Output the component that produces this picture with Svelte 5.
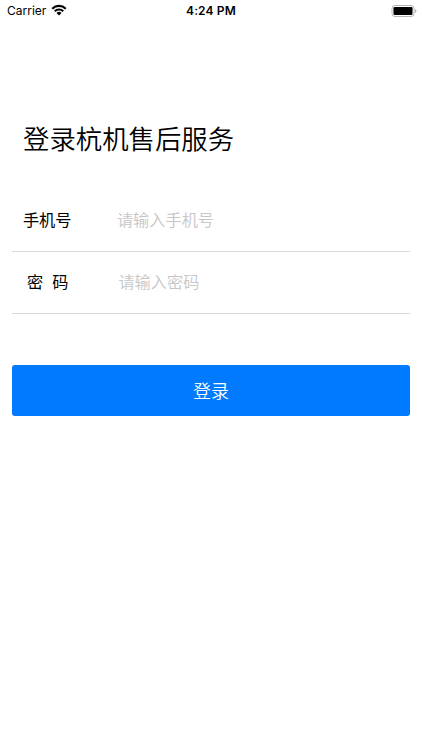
<script>
  let phone = $state('');
  let password = $state('');
</script>

<div class="screen">
  <header class="status">
    <div class="carrier">
      <span>Carrier</span>
      <svg width="16" height="12" viewBox="0 0 16 12">
        <path d="M0.5 3.9 A10.8 10.8 0 0 1 15.5 3.9 L14 5.4 A8.7 8.7 0 0 0 2 5.4 Z" />
        <path d="M3 6.4 A7.2 7.2 0 0 1 13 6.4 L11.5 7.9 A5 5 0 0 0 4.5 7.9 Z" />
        <path d="M5.5 8.9 A3.6 3.6 0 0 1 10.5 8.9 L8 11.4 Z" />
      </svg>
    </div>
    <div class="time">4:24 PM</div>
    <svg class="battery" width="26" height="12" viewBox="0 0 26 12">
      <rect x="1" y="0.5" width="22" height="11" rx="3" fill="none" stroke="#b4b4b4" />
      <rect x="2.5" y="2" width="19" height="8" rx="1.2" />
      <path d="M24.2 4 Q25.4 4.6 25.4 6 T24.2 8 Z" fill="#a6a6a6" />
    </svg>
  </header>

  <h1>登录杭机售后服务</h1>

  <form>
    <label class="row">
      <span class="name">手机号</span>
      <input type="tel" placeholder="请输入手机号" bind:value={phone} />
    </label>
    <label class="row pwd">
      <span class="name">密&nbsp; 码</span>
      <input type="password" placeholder="请输入密码" bind:value={password} />
    </label>
    <button type="button">登录</button>
  </form>
</div>

<style>
  .screen {
    height: 750px;
    overflow: hidden;
    background: #fff;
    color: #000;
    font-family: Inter, "Noto Sans CJK SC", sans-serif;
  }

  .status {
    display: grid;
    grid-template-columns: 1fr auto 1fr;
    align-items: center;
    height: 21px;
    padding: 0 5px 0 7px;
    font-size: 12px;
  }

  .carrier {
    display: flex;
    align-items: center;
    gap: 4.5px;
  }

  .carrier svg {
    margin-top: -1px;
  }

  .time {
    margin-right: 2px;
    font-weight: 600;
    letter-spacing: 0.15px;
  }

  .battery {
    justify-self: end;
  }

  h1 {
    margin: 98px 0 0 23px;
    font-size: 26.4px;
    line-height: 40px;
    font-weight: 350;
  }

  form {
    margin: 30px 12.4px 0;
  }

  .row {
    display: flex;
    align-items: center;
    height: 62px;
    box-sizing: border-box;
    border-bottom: 1px solid #d9d9d9;
    padding-left: 10.5px;
    font-size: 16.2px;
  }

  .row:first-child {
    height: 63px;
  }

  .name {
    width: 94px;
    padding-bottom: 2px;
  }

  .pwd {
    padding: 0 0 2px 14.5px;
  }

  .pwd .name {
    width: 91.5px;
  }

  input {
    flex: 1;
    min-width: 0;
    border: 0;
    padding: 0;
    outline: none;
    background: none;
    font: inherit;
  }

  input::placeholder {
    color: #c6c6c6;
    font-weight: 350;
  }

  button {
    display: block;
    width: 100%;
    height: 51px;
    margin-top: 51px;
    border: 0;
    border-radius: 3px;
    padding-bottom: 2px;
    background: #007aff;
    color: #fff;
    font-family: inherit;
    font-size: 18px;
    font-weight: 350;
  }
</style>
